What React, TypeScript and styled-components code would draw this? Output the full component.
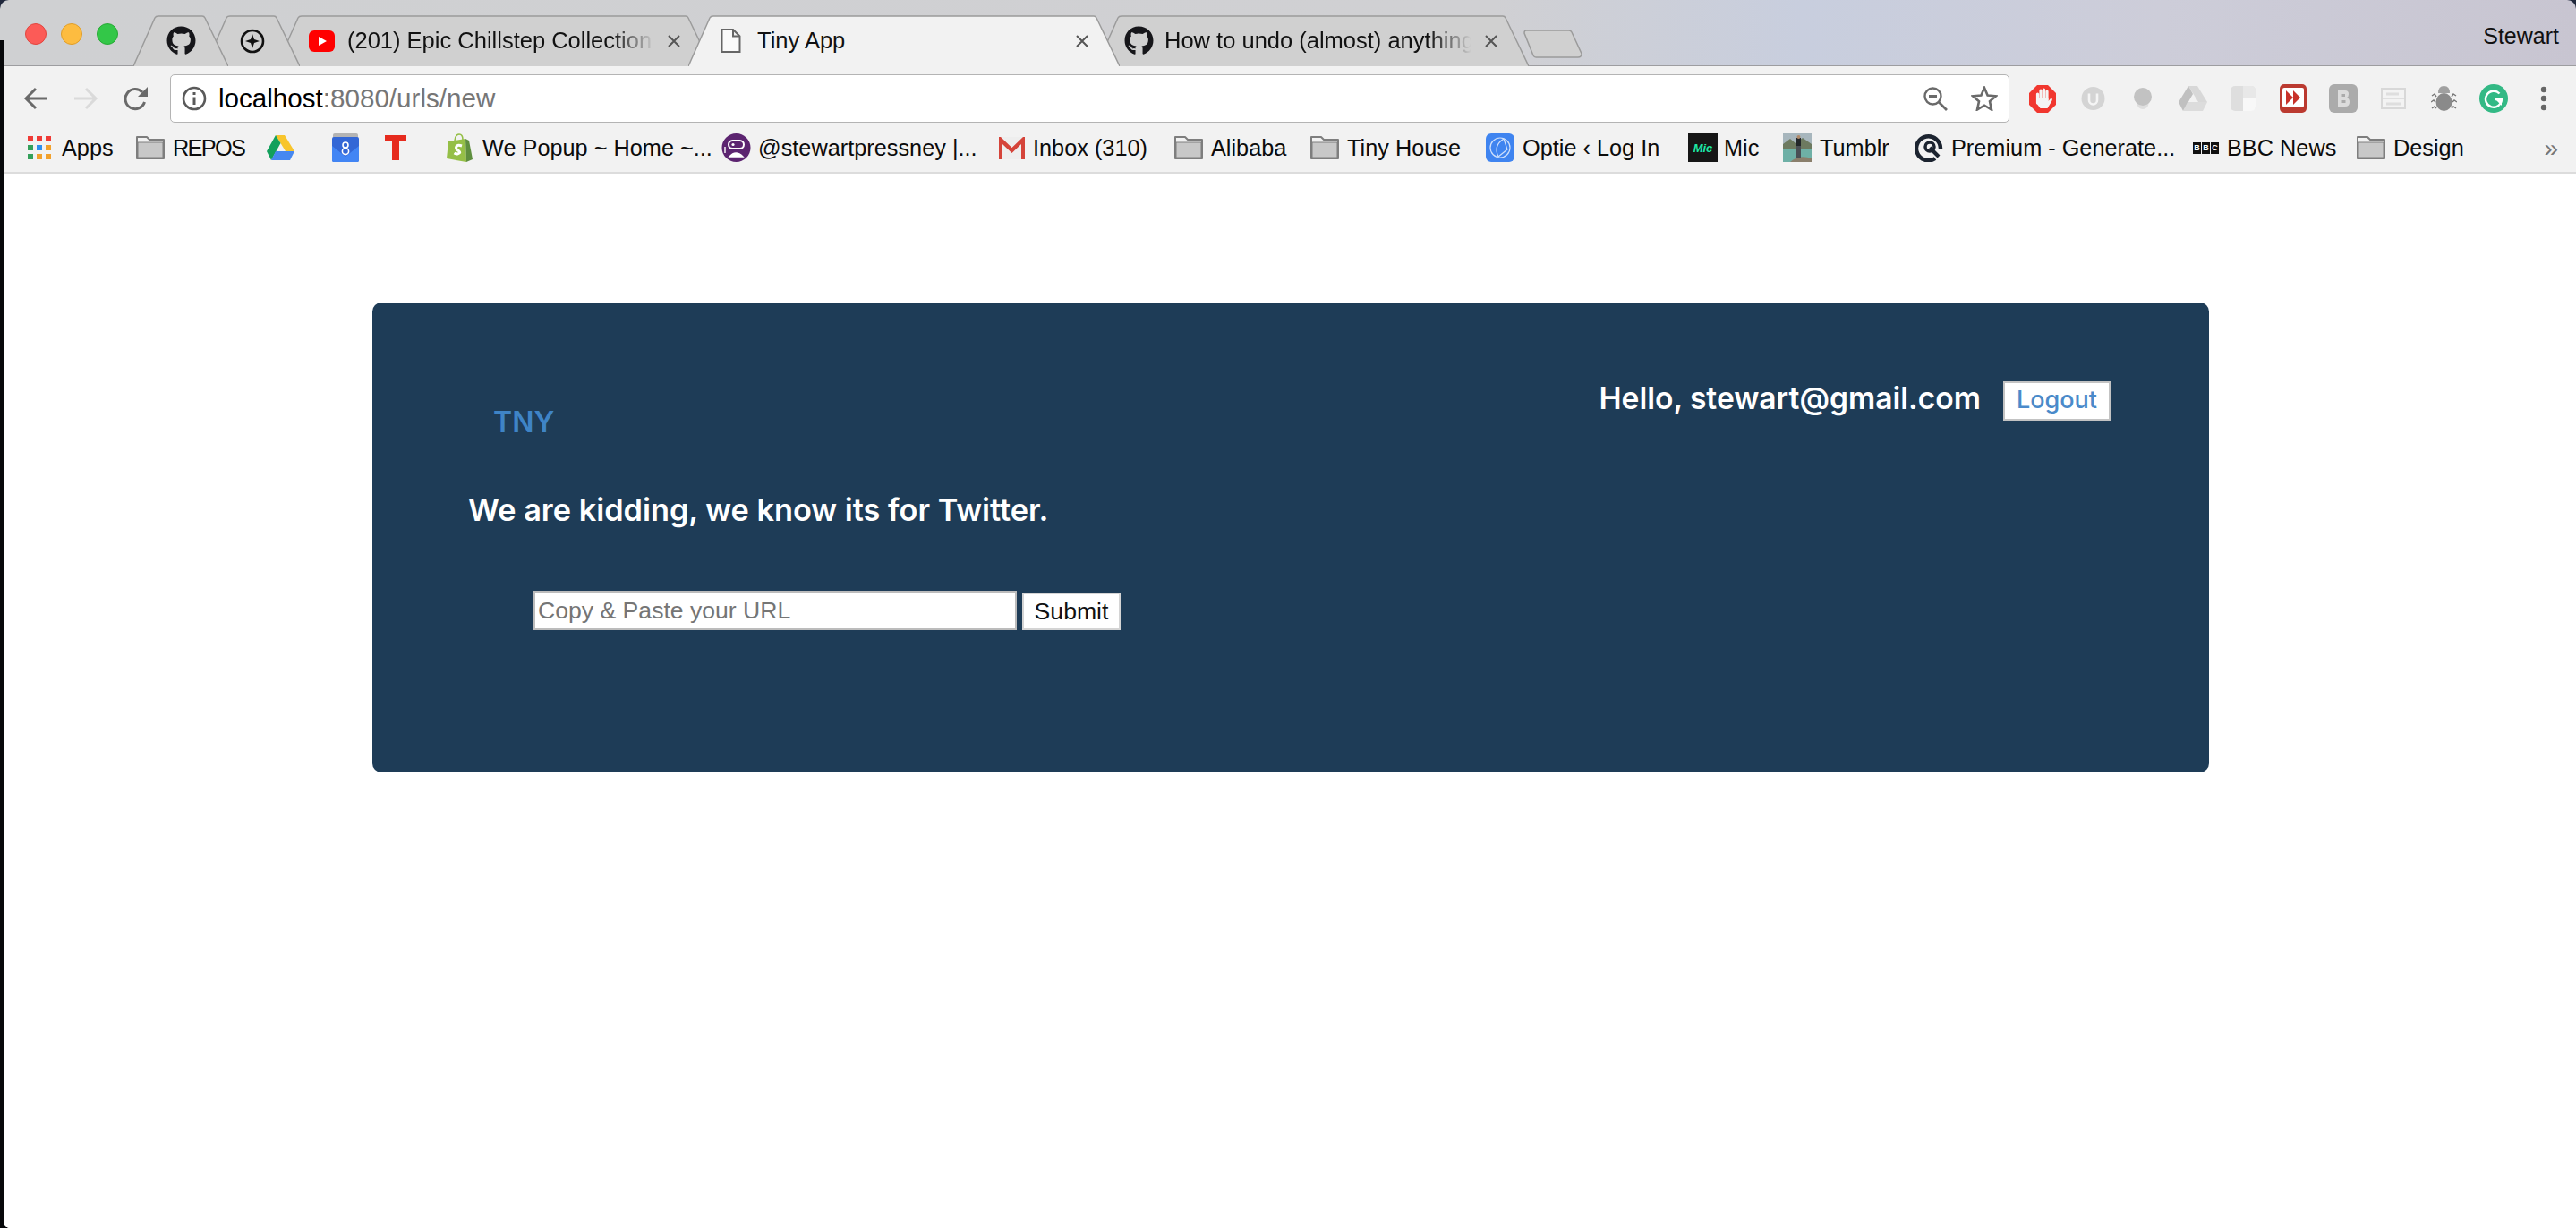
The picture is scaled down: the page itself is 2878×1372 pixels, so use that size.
import React from "react";
import styled, { createGlobalStyle } from "styled-components";
import { FaGithub } from "react-icons/fa";

const UI = `"Liberation Sans", Arial, sans-serif`;
const BRAND = `Inter, "Noto Sans", sans-serif`;

const GlobalStyle = createGlobalStyle`
    html, body {
        margin: 0;
        padding: 0;
        background: #ffffff;
    }
`;

const Page = styled.div`
    position: relative;
    display: flex;
    flex-direction: column;
    width: 2878px;
    height: 1372px;
    overflow: hidden;
    font-family: ${UI};
    background: #20283c;
`;

const EdgeStrip = styled.div`
    position: absolute;
    left: 0;
    top: 45px;
    bottom: 0;
    width: 4px;
    background: #07080a;
    &::after {
        content: "";
        position: absolute;
        left: 4px;
        bottom: 0;
        width: 6px;
        height: 6px;
        background: radial-gradient(circle at 100% 0, transparent 5.5px, #07080a 6px);
    }
`;

const TitleBar = styled.div`
    position: relative;
    display: flex;
    align-items: flex-end;
    flex: none;
    height: 73px;
    padding-left: 28px;
    border-bottom: 1px solid #9d9da0;
    border-top-left-radius: 10px;
    border-top-right-radius: 10px;
    background: linear-gradient(90deg, #cfd0d2 0%, #d0d0d3 58%, #c8cede 70%, #cdcdd9 84%, #c8c5d1 100%);
`;

const Lights = styled.div`
    display: flex;
    gap: 16px;
    flex: none;
    align-self: flex-start;
    width: 121px;
    margin-top: 26px;
`;

const Light = styled.span<{ $fill: string; $line: string }>`
    flex: none;
    box-sizing: border-box;
    width: 24px;
    height: 24px;
    border-radius: 50%;
    background: ${(p) => p.$fill};
    border: 1px solid ${(p) => p.$line};
`;

const Tabs = styled.div`
    display: flex;
    flex: none;
    height: 57px;
    margin-bottom: -1px;
`;

const Tab = styled.div<{ $w: number; $z: number; $center?: boolean; $left?: number }>`
    position: relative;
    display: flex;
    align-items: center;
    justify-content: ${(p) => (p.$center ? "center" : "flex-start")};
    flex: none;
    box-sizing: border-box;
    width: ${(p) => p.$w}px;
    padding: ${(p) => (p.$center ? "0" : `0 34px 0 ${p.$left ?? 36}px`)};
    margin-right: -26px;
    gap: 14px;
    font-size: 25.5px;
    color: #111;
    white-space: nowrap;
    z-index: ${(p) => p.$z};
`;

const TabShape = styled.svg`
    position: absolute;
    left: 0;
    top: 0;
    width: 100%;
    height: 100%;
`;

const TabTitle = styled.span<{ $fade?: boolean; $inset?: number }>`
    position: relative;
    flex: 1;
    min-width: 0;
    overflow: hidden;
    margin-left: ${(p) => p.$inset ?? 0}px;
    ${(p) =>
        p.$fade &&
        `-webkit-mask-image: linear-gradient(90deg, #000 86%, transparent 100%);
         mask-image: linear-gradient(90deg, #000 86%, transparent 100%);`}
`;

const TabIcon = styled.svg`
    position: relative;
    flex: none;
`;

const GithubMark = styled(FaGithub)`
    position: relative;
    flex: none;
    width: 33px;
    height: 33px;
    color: #16161a;
`;

const NewTab = styled.svg`
    flex: none;
    align-self: flex-start;
    margin: 33px 0 0 20px;
`;

const ProfileName = styled.span`
    position: absolute;
    top: 26px;
    right: 19px;
    font-size: 25px;
    line-height: 28px;
    color: #111;
`;

const Toolbar = styled.div`
    display: flex;
    align-items: center;
    flex: none;
    height: 72px;
    padding-left: 12px;
    background: #f2f2f2;
`;

const IconRow = styled.div<{ $cols: number }>`
    display: grid;
    grid-template-columns: repeat(${(p) => p.$cols}, 56px);
    justify-items: center;
    align-items: center;
    flex: none;
`;

const Omnibox = styled.div`
    display: flex;
    align-items: center;
    flex: none;
    box-sizing: border-box;
    width: 2055px;
    height: 54px;
    margin: 0 9px 0 10px;
    padding: 0 12px 0 12px;
    background: #ffffff;
    border: 1px solid #b4b4b4;
    border-radius: 5px;
`;

const UrlText = styled.div`
    flex: 1;
    margin-left: 13px;
    font-size: 29.6px;
    color: #767676;
`;

const UrlHost = styled.span`
    color: #000;
`;

const OmniActions = styled.div`
    display: flex;
    align-items: center;
    gap: 26px;
`;

const BookmarkBar = styled.div`
    position: relative;
    display: flex;
    align-items: center;
    flex: none;
    box-sizing: border-box;
    height: 48px;
    padding: 0 0 8px 31px;
    background: #f2f2f2;
    border-bottom: 2px solid #dcdcdc;
`;

const BookmarkItem = styled.div<{ $w: number; $gap: number; $tight?: boolean }>`
    display: flex;
    align-items: center;
    flex: none;
    gap: ${(p) => p.$gap}px;
    width: ${(p) => p.$w}px;
    font-size: 25.3px;
    letter-spacing: ${(p) => (p.$tight ? "-1.7px" : "0")};
    color: #0c0c0c;
    white-space: nowrap;
`;

const Chevrons = styled.span`
    position: absolute;
    right: 20px;
    top: 4px;
    font-size: 28px;
    color: #777;
`;

const Content = styled.main`
    flex: 1;
    padding: 144px 410px 0 416px;
    background: #ffffff;
`;

const Panel = styled.section`
    box-sizing: border-box;
    height: 525px;
    padding: 88px 110px 0 107px;
    background: #1e3c57;
    border-radius: 10px;
`;

const PanelHead = styled.div`
    display: flex;
    justify-content: space-between;
    align-items: flex-start;
`;

const Logo = styled.a`
    margin: 26px 0 0 28px;
    font-family: ${BRAND};
    font-size: 32px;
    line-height: 40px;
    font-weight: 600;
    color: #3f84c6;
`;

const UserBox = styled.div`
    display: flex;
    align-items: center;
    gap: 25px;
`;

const Hello = styled.span`
    padding-bottom: 7px;
    font-family: ${BRAND};
    font-size: 33.6px;
    font-weight: 600;
    line-height: 37px;
    color: #ffffff;
`;

const LogoutButton = styled.button`
    box-sizing: border-box;
    width: 120px;
    height: 44px;
    padding: 0 0 3px;
    background: #ffffff;
    border: 2px solid #c3c3c3;
    font-family: ${BRAND};
    font-size: 27px;
    font-weight: 500;
    color: #4a8aca;
`;

const Tagline = styled.h2`
    margin: 56px 0 0;
    font-family: ${BRAND};
    font-size: 34.3px;
    line-height: 44px;
    font-weight: 600;
    color: #ffffff;
`;

const UrlForm = styled.form`
    display: flex;
    align-items: flex-end;
    gap: 6px;
    margin: 68px 0 0 73px;
`;

const UrlInput = styled.input`
    box-sizing: border-box;
    width: 540px;
    height: 44px;
    padding: 0 3px;
    border: 2px solid #bcbcbc;
    background: #ffffff;
    font-family: ${UI};
    font-size: 26.6px;
    &::placeholder {
        color: #757575;
        opacity: 1;
    }
`;

const SubmitButton = styled.button`
    box-sizing: border-box;
    width: 110px;
    height: 42px;
    padding: 0;
    background: #ffffff;
    border: 2px solid #d4d4d4;
    font-family: ${UI};
    font-size: 26.6px;
    color: #111;
`;

const MicBadge = styled.span`
    display: flex;
    align-items: center;
    justify-content: center;
    flex: none;
    width: 33px;
    height: 32px;
    background: #161616;
    color: #1de9a5;
    font-size: 13px;
    font-weight: 700;
    font-style: italic;
    letter-spacing: 0;
`;

const BbcBlocks = styled.span`
    display: flex;
    flex: none;
    gap: 1px;
`;

const BbcBlock = styled.span`
    display: flex;
    align-items: center;
    justify-content: center;
    width: 9px;
    height: 13px;
    background: #111;
    color: #fff;
    font-size: 9px;
    font-weight: 700;
    line-height: 13px;
`;

function TabOutline({ w, fill }: { w: number; fill: string }) {
    return (
        <TabShape viewBox={`0 0 ${w} 57`}>
            <path
                d={`M0 57 L24 3 Q25 1 28 1 L${w - 29} 1 Q${w - 27} 1 ${w - 26} 3 L${w} 57`}
                fill={fill}
                stroke="#9b9b9b"
                strokeWidth="1.5"
            />
        </TabShape>
    );
}

function CloseX() {
    return (
        <TabIcon width="16" height="16" viewBox="0 0 16 16">
            <path d="M2 2 L14 14 M14 2 L2 14" stroke="#555" strokeWidth="2" />
        </TabIcon>
    );
}

function Folder() {
    return (
        <svg width="32" height="26" viewBox="0 0 32 26" style={{ flex: "none" }}>
            <path d="M1 1 H12 L15 4 H31 V25 H1 Z" fill="#f2f2f2" stroke="#7e7e7e" strokeWidth="2" strokeLinejoin="round" />
            <path d="M2 7 H30 V24 H2 Z" fill="#c8c8c8" stroke="#7e7e7e" strokeWidth="1" />
        </svg>
    );
}

function AppsGrid() {
    const colors = ["#ef3b36", "#ef3b36", "#ef3b36", "#34a05a", "#2f8fee", "#f2a12c", "#34a05a", "#f2a12c", "#f2a12c"];
    return (
        <svg width="26" height="26" viewBox="0 0 26 26" style={{ flex: "none" }}>
            {colors.map((c, i) => (
                <rect key={i} x={(i % 3) * 10} y={Math.floor(i / 3) * 10} width="6" height="6" fill={c} />
            ))}
        </svg>
    );
}

function DriveColor() {
    return (
        <svg width="31" height="28" viewBox="0 0 31 28">
            <path d="M10 0 H20 L31 18 H21 Z" fill="#f8c52c" />
            <path d="M10 0 L0 18 L5 28 L15.5 9 Z" fill="#12a05c" />
            <path d="M10 18 H31 L26 28 H5 Z" fill="#4688f1" />
        </svg>
    );
}

function CalendarIcon() {
    return (
        <svg width="30" height="32" viewBox="0 0 30 32">
            <rect x="1" y="0" width="28" height="8" rx="2" fill="#b4b4b4" />
            <rect x="0" y="4" width="30" height="28" rx="2" fill="#3367d6" />
            <path d="M0 14 L15 26 L30 14 V30 Q30 32 28 32 H2 Q0 32 0 30 Z" fill="#4285f4" />
            <circle cx="15" cy="13" r="3" fill="none" stroke="#fff" strokeWidth="1.6" />
            <circle cx="15" cy="20" r="3.6" fill="none" stroke="#fff" strokeWidth="1.6" />
        </svg>
    );
}

function RedT() {
    return (
        <svg width="24" height="28" viewBox="0 0 24 28">
            <path d="M0 0 H24 V7 H16 V28 H8 V7 H0 Z" fill="#e62b1e" />
        </svg>
    );
}

function ShopifyBag() {
    return (
        <svg width="29" height="32" viewBox="0 0 29 32">
            <path d="M2 9 L21 6 L22 32 L0 28 Z" fill="#95bf47" />
            <path d="M21 6 L25 8 L29 29 L22 32 Z" fill="#5e8e3e" />
            <path d="M9 8 Q10 1 14 1 Q18 1 18 7" fill="none" stroke="#95bf47" strokeWidth="1.6" />
            <path d="M17 14 Q11 12 10.5 16 Q10.5 18 14 20 Q16 22 12 23 Q10 23 8.5 22" fill="none" stroke="#fff" strokeWidth="3" />
        </svg>
    );
}

function PurpleAvatar() {
    return (
        <svg width="33" height="32" viewBox="0 0 33 32">
            <circle cx="16.5" cy="16" r="16" fill="#5c2470" />
            <rect x="8" y="8" width="17" height="9" rx="4.5" fill="none" stroke="#fff" strokeWidth="2" />
            <circle cx="13" cy="12.5" r="1.6" fill="#fff" />
            <path d="M9 26 Q16 18 24 26 Z M4 15 V22" fill="#fff" stroke="#fff" strokeWidth="1.4" />
        </svg>
    );
}

function GmailM() {
    return (
        <svg width="29" height="26" viewBox="0 0 29 26">
            <rect x="0" y="1" width="29" height="25" fill="#eeeeee" />
            <path d="M0 26 V1 H2 L14.5 13 L27 1 H29 V26 H25 V9 L14.5 19 L4 9 V26 Z" fill="#d5443a" />
        </svg>
    );
}

function OptieIcon() {
    return (
        <svg width="32" height="32" viewBox="0 0 32 32">
            <rect width="32" height="32" rx="6" fill="#3f84f0" />
            <circle cx="16" cy="16" r="11" fill="none" stroke="#cfe0fb" strokeWidth="1.2" />
            <path d="M20 6 Q8 14 14 26 M20 6 L24 18 L14 26" fill="none" stroke="#cfe0fb" strokeWidth="1.2" />
        </svg>
    );
}

function TumblrPhoto() {
    return (
        <svg width="32" height="32" viewBox="0 0 32 32">
            <rect width="32" height="12" fill="#a7b6bd" />
            <path d="M0 12 L8 6 L14 11 L22 5 L32 12 V18 H0 Z" fill="#6d7a60" />
            <rect y="17" width="32" height="15" fill="#6eb0a6" />
            <path d="M8 32 Q18 23 32 28 V32 Z" fill="#8a7f6c" />
            <rect x="15" y="5" width="5" height="10" fill="#22262a" />
            <rect x="15" y="14" width="5" height="13" fill="#4a4f55" />
            <circle cx="17.5" cy="4" r="2" fill="#b08a6a" />
        </svg>
    );
}

function PremiumIcon() {
    return (
        <svg width="32" height="32" viewBox="0 0 32 32">
            <path d="M23 28 A13.5 13.5 0 1 1 29 17" fill="none" stroke="#1c2430" strokeWidth="4.5" />
            <circle cx="17" cy="15" r="5" fill="none" stroke="#1c2430" strokeWidth="3.5" />
            <path d="M17 16 L27 26" stroke="#1c2430" strokeWidth="4" />
        </svg>
    );
}

function BbcIcon() {
    return (
        <BbcBlocks>
            <BbcBlock>B</BbcBlock>
            <BbcBlock>B</BbcBlock>
            <BbcBlock>C</BbcBlock>
        </BbcBlocks>
    );
}

const bookmarks: { w: number; gap: number; icon: React.ReactNode; label?: string; tight?: boolean }[] = [
    { w: 121, gap: 12, icon: <AppsGrid />, label: "Apps" },
    { w: 146, gap: 9, icon: <Folder />, label: "REPOS", tight: true },
    { w: 73, gap: 0, icon: <DriveColor /> },
    { w: 59, gap: 0, icon: <CalendarIcon /> },
    { w: 69, gap: 0, icon: <RedT /> },
    { w: 307, gap: 11, icon: <ShopifyBag />, label: "We Popup ~ Home ~..." },
    { w: 310, gap: 8, icon: <PurpleAvatar />, label: "@stewartpressney |..." },
    { w: 196, gap: 9, icon: <GmailM />, label: "Inbox (310)" },
    { w: 152, gap: 9, icon: <Folder />, label: "Alibaba" },
    { w: 196, gap: 9, icon: <Folder />, label: "Tiny House" },
    { w: 226, gap: 9, icon: <OptieIcon />, label: "Optie ‹ Log In" },
    { w: 106, gap: 7, icon: <MicBadge>Mic</MicBadge>, label: "Mic" },
    { w: 147, gap: 9, icon: <TumblrPhoto />, label: "Tumblr" },
    { w: 311, gap: 9, icon: <PremiumIcon />, label: "Premium - Generate..." },
    { w: 183, gap: 9, icon: <BbcIcon />, label: "BBC News" },
    { w: 130, gap: 9, icon: <Folder />, label: "Design" },
];

function Extensions() {
    return (
        <IconRow $cols={11}>
            <svg width="30" height="31" viewBox="0 0 30 31">
                <path d="M9 0 H21 L30 9 V22 L21 31 H9 L0 22 V9 Z" fill="#f1372f" />
                <path d="M9.5 10 V20 M13 6 V16 M16.5 5 V16 M20 7 V17" stroke="#f4f4f4" strokeWidth="3.2" strokeLinecap="round" />
                <path d="M8 15 H21.5 V18 L24.5 14.5 Q26.5 15 25.5 17.5 L20.5 26 H12.5 L8 20 Z" fill="#f4f4f4" />
            </svg>
            <svg width="27" height="26" viewBox="0 0 27 26">
                <circle cx="13.5" cy="13" r="13" fill="#d4d4d4" />
                <path d="M9 7.5 V15 A4.5 4.5 0 0 0 18 15 V7.5" fill="none" stroke="#f5f5f5" strokeWidth="2.6" />
            </svg>
            <svg width="20" height="24" viewBox="0 0 20 24">
                <circle cx="10" cy="17.5" r="6.5" fill="#dedede" />
                <circle cx="10" cy="10" r="10" fill="#c2c2c2" />
            </svg>
            <svg width="32" height="28" viewBox="0 0 32 28">
                <path d="M11 0 H21 L32 18 H22 Z" fill="#d8d8d8" />
                <path d="M11 0 L0 18 L5 28 L16 9 Z" fill="#c0c0c0" />
                <path d="M10 18 H32 L27 28 H5 Z" fill="#dcdcdc" />
            </svg>
            <svg width="28" height="28" viewBox="0 0 28 28">
                <rect width="28" height="28" rx="5" fill="#dedede" />
                <path d="M14 0 H23 Q28 0 28 5 V14 H14 Z" fill="#e8e8e8" />
                <path d="M14 14 H28 V23 Q28 28 23 28 H14 Z" fill="#f8f8f8" />
            </svg>
            <svg width="30" height="32" viewBox="0 0 30 32">
                <rect width="30" height="32" rx="5" fill="#bb3a30" />
                <rect x="3" y="4" width="24" height="22" rx="2" fill="#fff" />
                <path d="M7 7 L15 15 L7 23 Z M15 7 L23 15 L15 23 Z" fill="#c8322a" />
            </svg>
            <svg width="32" height="32" viewBox="0 0 32 32">
                <rect width="32" height="32" rx="6" fill="#ababab" />
                <path d="M10 7 H18 Q22 7 22 11 Q22 14 20 15 Q23 16 23 20 Q23 25 18 25 H10 Z" fill="#dcdcdc" />
                <rect x="14.5" y="11" width="3.5" height="3" fill="#ababab" />
                <rect x="14.5" y="18" width="4" height="3" fill="#ababab" />
            </svg>
            <svg width="28" height="24" viewBox="0 0 28 24">
                <rect x="1" y="1" width="26" height="22" fill="#f3f3f3" stroke="#d8d8d8" strokeWidth="2" />
                <path d="M1 12 H27" stroke="#d8d8d8" strokeWidth="1.5" />
                <path d="M6 7 H20 M6 18 H22" stroke="#dedede" strokeWidth="3" />
            </svg>
            <svg width="29" height="28" viewBox="0 0 29 28">
                <path d="M8 8 Q8 0 14.5 0 Q21 0 21 8 Z" fill="#a0a0a0" />
                <ellipse cx="14.5" cy="18" rx="9" ry="10" fill="#8a8a8a" />
                <path d="M1 11 L4 9 L6 12 M28 11 L25 9 L23 12 M0 18 L3 16 L5 18 M29 18 L26 16 L24 18 M1 25 L4 23 L6 25 M28 25 L25 23 L23 25" fill="none" stroke="#777" strokeWidth="1.4" />
            </svg>
            <svg width="32" height="32" viewBox="0 0 32 32">
                <circle cx="16" cy="16" r="16" fill="#33b985" />
                <path d="M22.5 10.5 A9 9 0 1 0 25 17 H17.5" fill="none" stroke="#fff" strokeWidth="2.4" />
                <path d="M25 24 V17 H18 Z" fill="#fff" />
            </svg>
            <svg width="8" height="28" viewBox="0 0 8 28">
                <circle cx="4" cy="4" r="3.2" fill="#666" />
                <circle cx="4" cy="14" r="3.2" fill="#666" />
                <circle cx="4" cy="24" r="3.2" fill="#666" />
            </svg>
        </IconRow>
    );
}

export default function App() {
    return (
        <>
            <GlobalStyle />
            <Page>
                <TitleBar>
                    <Lights>
                        <Light $fill="#fc5b57" $line="#e2463f" />
                        <Light $fill="#fdbc40" $line="#e09e2a" />
                        <Light $fill="#33c748" $line="#27aa35" />
                    </Lights>
                    <Tabs>
                        <Tab $w={106} $z={5} $center>
                            <TabOutline w={106} fill="#d0d0d0" />
                            <GithubMark />
                        </Tab>
                        <Tab $w={106} $z={4} $center>
                            <TabOutline w={106} fill="#d0d0d0" />
                            <TabIcon width="28" height="28" viewBox="0 0 28 28">
                                <circle cx="14" cy="14" r="12" fill="none" stroke="#111" strokeWidth="2.6" />
                                <path d="M14 6 L16 12 L22 14 L16 16 L14 22 L12 16 L6 14 L12 12 Z" fill="#111" />
                            </TabIcon>
                        </Tab>
                        <Tab $w={486} $z={3}>
                            <TabOutline w={486} fill="#d0d0d0" />
                            <TabIcon width="29" height="24" viewBox="0 0 29 24">
                                <rect width="29" height="24" rx="6" fill="#f00" />
                                <path d="M11 7 L20 12 L11 17 Z" fill="#fff" />
                            </TabIcon>
                            <TabTitle $fade>(201) Epic Chillstep Collection</TabTitle>
                            <CloseX />
                        </Tab>
                        <Tab $w={482} $z={6}>
                            <TabOutline w={482} fill="#f2f2f2" />
                            <TabIcon width="23" height="27" viewBox="0 0 23 27">
                                <path d="M1.5 1 H14 L21.5 8.5 V26 H1.5 Z M14 1 V8.5 H21.5" fill="#fafafa" stroke="#666" strokeWidth="2" />
                            </TabIcon>
                            <TabTitle $inset={4}>Tiny App</TabTitle>
                            <CloseX />
                        </Tab>
                        <Tab $w={483} $z={2} $left={31}>
                            <TabOutline w={483} fill="#d0d0d0" />
                            <GithubMark />
                            <TabTitle $fade $inset={-2}>How to undo (almost) anything</TabTitle>
                            <CloseX />
                        </Tab>
                    </Tabs>
                    <NewTab width="66" height="32" viewBox="0 0 66 32">
                        <path d="M3 1 H51 Q53 1 54 3 L65 27 Q65 31 61 31 H14 Q12 31 11 29 L1 4 Q1 1 3 1 Z" fill="#d0d0d0" stroke="#9b9b9b" strokeWidth="1.5" />
                    </NewTab>
                    <ProfileName>Stewart</ProfileName>
                </TitleBar>
                <Toolbar>
                    <IconRow $cols={3}>
                        <svg width="28" height="26" viewBox="0 0 28 26">
                            <path d="M27 13 H3 M14 2 L3 13 L14 24" fill="none" stroke="#6a6a6a" strokeWidth="3" />
                        </svg>
                        <svg width="28" height="26" viewBox="0 0 28 26">
                            <path d="M1 13 H25 M14 2 L25 13 L14 24" fill="none" stroke="#dadada" strokeWidth="3" />
                        </svg>
                        <svg width="28" height="27" viewBox="0 0 28 27">
                            <path d="M23.5 17 A11 11 0 1 1 21 6" fill="none" stroke="#6a6a6a" strokeWidth="3" />
                            <path d="M27 0 V11 H16 Z" fill="#6a6a6a" />
                        </svg>
                    </IconRow>
                    <Omnibox>
                        <svg width="28" height="28" viewBox="0 0 28 28">
                            <circle cx="14" cy="14" r="12" fill="none" stroke="#5a5a5a" strokeWidth="2.6" />
                            <path d="M14 12.5 V21 M14 7 V10" stroke="#5a5a5a" strokeWidth="3" />
                        </svg>
                        <UrlText>
                            <UrlHost>localhost</UrlHost>:8080/urls/new
                        </UrlText>
                        <OmniActions>
                            <svg width="27" height="27" viewBox="0 0 27 27">
                                <circle cx="10.5" cy="10.5" r="9" fill="none" stroke="#6a6a6a" strokeWidth="2.4" />
                                <path d="M6 10.5 H15 M17 17 L26 26" stroke="#6a6a6a" strokeWidth="2.8" />
                            </svg>
                            <svg width="30" height="28" viewBox="0 0 30 28">
                                <path d="M15 2 L18.6 10.5 L28 11.3 L21 17.3 L23 26.5 L15 21.7 L7 26.5 L9 17.3 L2 11.3 L11.4 10.5 Z" fill="none" stroke="#6a6a6a" strokeWidth="2.6" />
                            </svg>
                        </OmniActions>
                    </Omnibox>
                    <Extensions />
                </Toolbar>
                <BookmarkBar>
                    {bookmarks.map((b, i) => (
                        <BookmarkItem key={i} $w={b.w} $gap={b.gap} $tight={b.tight}>
                            {b.icon}
                            {b.label}
                        </BookmarkItem>
                    ))}
                    <Chevrons>»</Chevrons>
                </BookmarkBar>
                <Content>
                    <Panel>
                        <PanelHead>
                            <Logo>TNY</Logo>
                            <UserBox>
                                <Hello>Hello, stewart@gmail.com</Hello>
                                <LogoutButton type="button">Logout</LogoutButton>
                            </UserBox>
                        </PanelHead>
                        <Tagline>We are kidding, we know its for Twitter.</Tagline>
                        <UrlForm>
                            <UrlInput type="text" placeholder="Copy & Paste your URL" />
                            <SubmitButton type="button">Submit</SubmitButton>
                        </UrlForm>
                    </Panel>
                </Content>
                <EdgeStrip />
            </Page>
        </>
    );
}
